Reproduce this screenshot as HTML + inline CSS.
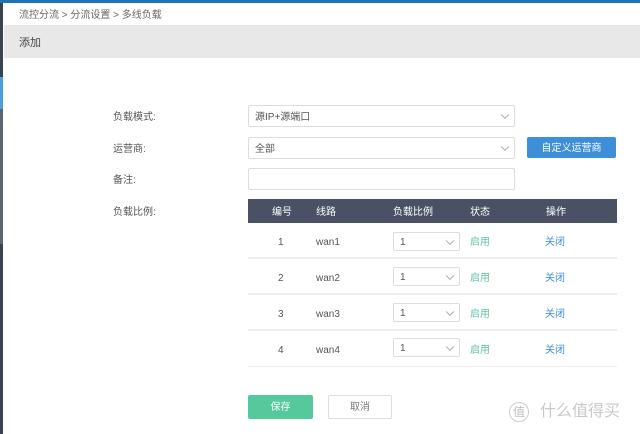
<!DOCTYPE html>
<html><head><meta charset="utf-8"><style>
*{margin:0;padding:0;box-sizing:border-box}
body{width:640px;height:434px;position:relative;overflow:hidden;background:#fff;font-family:"Liberation Sans","Noto Sans CJK SC",sans-serif;font-size:10px;color:#555;line-height:1}
.a{position:absolute}
.sel{position:absolute;border:1px solid #dcdcdc;border-radius:2px;background:#fff;padding-left:6px;padding-top:3px;color:#555;font-size:10px;display:flex;align-items:center}
.chev{position:absolute;right:6px;top:50%;width:6px;height:6px;border-right:1px solid #aaa;border-bottom:1px solid #aaa;transform:translateY(-70%) rotate(45deg)}
.lbl{position:absolute;left:113px;font-size:10px;color:#555}
.row{position:absolute;left:248px;width:369px;height:36px;border-bottom:2px solid #eee}
.row span{position:absolute;top:0;height:36px;padding-top:3px;display:flex;align-items:center}
.hd span{position:absolute;top:0;height:24px;padding-top:3px;display:flex;align-items:center}
.btn{padding-top:2px}
</style></head><body>
<div class="a" style="left:0;top:0;width:640px;height:3px;background:#1e74b9"></div>
<div class="a" style="left:0;top:3px;width:3px;height:431px;background:#3a4350"></div>
<div class="a" style="left:0;top:77px;width:3px;height:32px;background:#4a9fe0"></div>
<div class="a" style="left:0;top:109px;width:3px;height:135px;background:#5d6670"></div>
<div class="a" style="left:19px;top:11px;color:#666;font-size:10px">流控分流 &gt; 分流设置 &gt; 多线负载</div>
<div class="a" style="left:4px;top:25px;width:636px;height:33px;background:#e8e8e8"></div>
<div class="a" style="left:19px;top:38px;color:#444;font-size:11px">添加</div>

<div class="lbl" style="top:113px">负载模式:</div>
<div class="sel" style="left:248px;top:105px;width:267px;height:22px">源IP+源端口<i class="chev"></i></div>
<div class="lbl" style="top:145px">运营商:</div>
<div class="sel" style="left:248px;top:137px;width:267px;height:22px">全部<i class="chev"></i></div>
<div class="a btn" style="left:527px;top:137px;width:89px;height:21px;background:#3d8fd9;border-radius:2px;color:#fff;display:flex;align-items:center;justify-content:center">自定义运营商</div>
<div class="lbl" style="top:176px">备注:</div>
<div class="sel" style="left:248px;top:168px;width:267px;height:22px"></div>
<div class="lbl" style="top:208px">负载比例:</div>

<div class="a hd" style="left:248px;top:199px;width:369px;height:24px;background:#4a5164;color:#fff">
<span style="left:24px">编号</span><span style="left:68px">线路</span><span style="left:145px">负载比例</span><span style="left:222px">状态</span><span style="left:298px">操作</span></div>

<div class="row" style="top:223px"><span style="left:30px">1</span><span style="left:68px">wan1</span><span style="left:222px;color:#5cc79b">启用</span><span style="left:297px;color:#3d8fd9">关闭</span></div>
<div class="row" style="top:259px"><span style="left:30px">2</span><span style="left:68px">wan2</span><span style="left:222px;color:#5cc79b">启用</span><span style="left:297px;color:#3d8fd9">关闭</span></div>
<div class="row" style="top:295px"><span style="left:30px">3</span><span style="left:68px">wan3</span><span style="left:222px;color:#5cc79b">启用</span><span style="left:297px;color:#3d8fd9">关闭</span></div>
<div class="row" style="top:331px;border-bottom-width:1px"><span style="left:30px">4</span><span style="left:68px">wan4</span><span style="left:222px;color:#5cc79b">启用</span><span style="left:297px;color:#3d8fd9">关闭</span></div>
<div class="sel" style="left:393px;top:232px;width:67px;height:19px">1<i class="chev"></i></div>
<div class="sel" style="left:393px;top:267px;width:67px;height:19px">1<i class="chev"></i></div>
<div class="sel" style="left:393px;top:303px;width:67px;height:19px">1<i class="chev"></i></div>
<div class="sel" style="left:393px;top:338px;width:67px;height:19px">1<i class="chev"></i></div>

<div class="a btn" style="left:248px;top:395px;width:65px;height:24px;background:#56c99c;border-radius:2px;color:#fff;display:flex;align-items:center;justify-content:center">保存</div>
<div class="a btn" style="left:328px;top:395px;width:64px;height:24px;border:1px solid #ddd;border-radius:2px;color:#777;display:flex;align-items:center;justify-content:center">取消</div>
<div class="a" style="left:509px;top:402px;width:20px;height:20px;border:1.5px solid #ccc;border-radius:50%;color:#bbb;font-size:12px;display:flex;align-items:center;justify-content:center">值</div>
<div class="a" style="left:540px;top:404px;color:#c8c8c8;font-size:16px">什么值得买</div>
</body></html>
